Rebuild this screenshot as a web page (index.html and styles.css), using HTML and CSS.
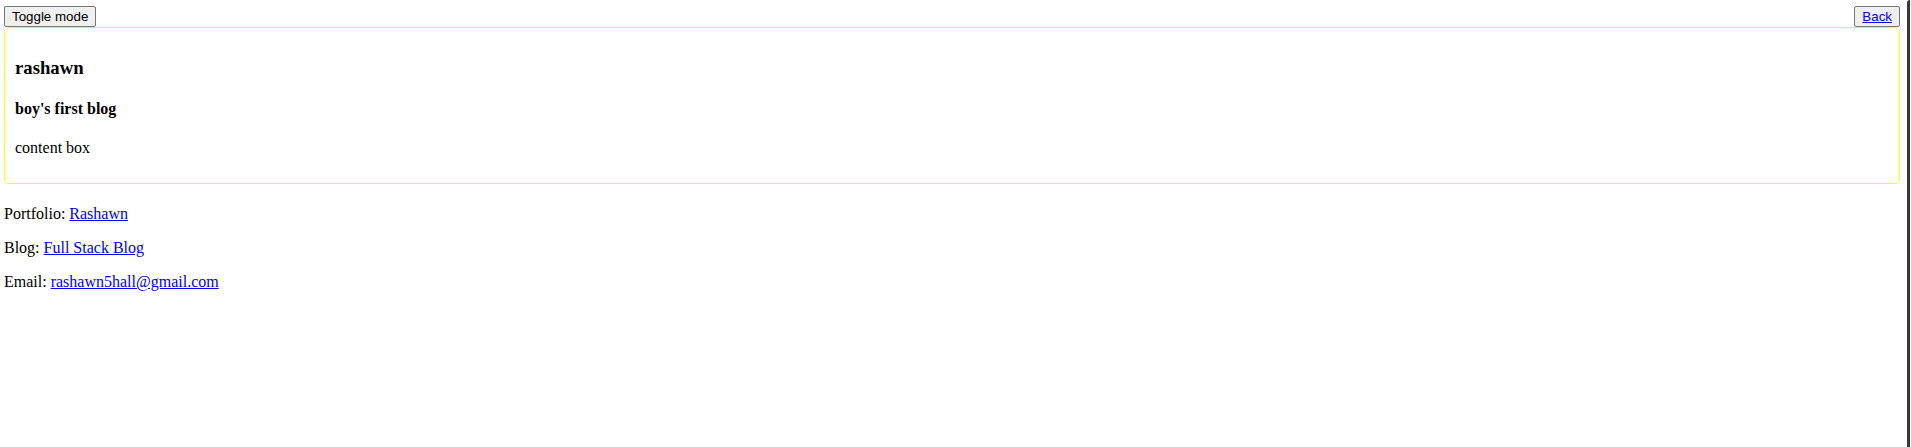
FILE: index.html
```html
<!DOCTYPE html>
<html>
<head>
<meta charset="utf-8">
<title>rashawn</title>
<link rel="stylesheet" href="styles.css">
</head>
<body>
<div class="page">
  <div class="topbar">
    <button class="btn" type="button">Toggle mode</button>
    <button class="btn" type="button"><a href="#">Back</a></button>
  </div>
  <div class="box">
    <h3>rashawn</h3>
    <h4>boy's first blog</h4>
    <p>content box</p>
  </div>
  <p>Portfolio: <a href="#">Rashawn</a></p>
  <p>Blog: <a href="#">Full Stack Blog</a></p>
  <p>Email: <a href="#">rashawn5hall@gmail.com</a></p>
</div>
<div class="edge"></div>
</body>
</html>
```
FILE: styles.css
```css
html, body {
  margin: 0;
  padding: 0;
  background: #fff;
}
body {
  font-family: "Liberation Serif", "Times New Roman", serif;
  font-size: 16px;
  line-height: 1.15;
  color: #000;
}
.page {
  padding: 6px 11px 0 4px;
}
.topbar {
  display: flex;
  justify-content: space-between;
  align-items: flex-start;
}
.btn {
  font-family: "Liberation Sans", Arial, sans-serif;
  font-size: 13.333px;
  line-height: 15px;
  height: 21px;
  padding: 1px 7px;
  margin: 0;
  background: #efefef;
  color: #000;
  border: 1px solid #767676;
  border-radius: 2px;
}
.btn a {
  color: #0000ee;
}
.box {
  border: 1px solid #ffff00;
  border-radius: 5px;
  padding: 10px 10px 9px;
  margin-bottom: 21px;
}
.box h3 {
  font-size: 18.72px;
  margin: 18.72px 0;
}
.box h4 {
  font-size: 16px;
  margin: 21.28px 0;
}
.box p {
  margin: 16px 0;
}
p {
  margin: 16px 0;
}
a {
  color: #0000ee;
}
.edge {
  position: fixed;
  top: 0;
  bottom: 0;
  right: 1px;
  width: 3px;
  background: #383838;
  border-top-left-radius: 3px;
}
```
